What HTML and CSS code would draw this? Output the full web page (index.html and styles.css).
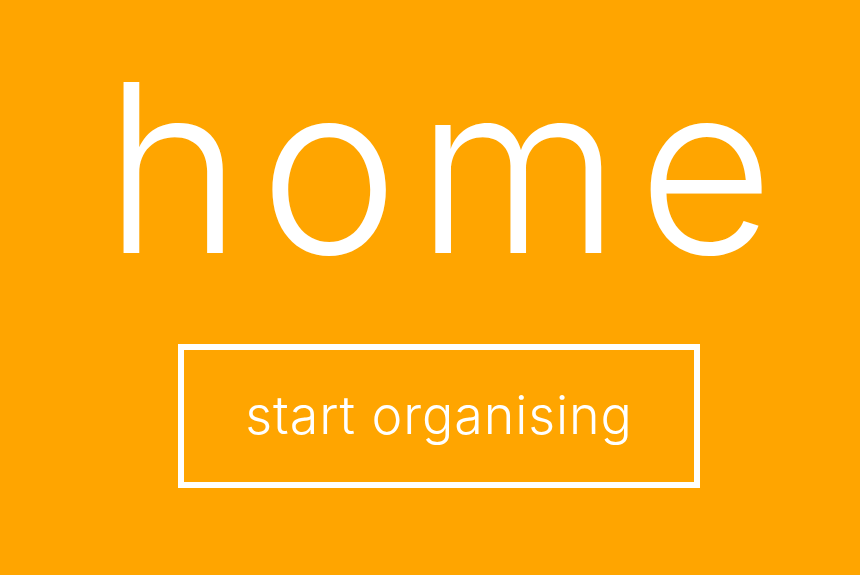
FILE: index.html
```html
<!DOCTYPE html>
<html lang="en">
<head>
<meta charset="utf-8">
<title>home</title>
<link rel="stylesheet" href="styles.css">
</head>
<body>
<main class="hero">
  <h1 class="hero-title">home</h1>
  <a class="hero-button" href="#">start organising</a>
</main>
</body>
</html>
```

FILE: styles.css
```css
html, body {
  margin: 0;
  padding: 0;
  height: 100%;
}

body {
  background: #ffa500;
  color: #ffffff;
  font-family: "Inter", "Liberation Sans", sans-serif;
  overflow: hidden;
}

.hero {
  display: flex;
  flex-direction: column;
  align-items: center;
  padding-left: 18px;
}

.hero-title {
  margin: 50px -17px 0 0;
  font-size: 235px;
  font-weight: 300;
  line-height: 1;
  letter-spacing: 17px;
}

.hero-button {
  box-sizing: border-box;
  display: flex;
  align-items: center;
  justify-content: center;
  width: 522px;
  height: 144px;
  margin-top: 59px;
  border: 6px solid #ffffff;
  color: #ffffff;
  text-decoration: none;
  font-size: 52px;
  font-weight: 300;
  line-height: 1;
  letter-spacing: 0.9px;
}
```
